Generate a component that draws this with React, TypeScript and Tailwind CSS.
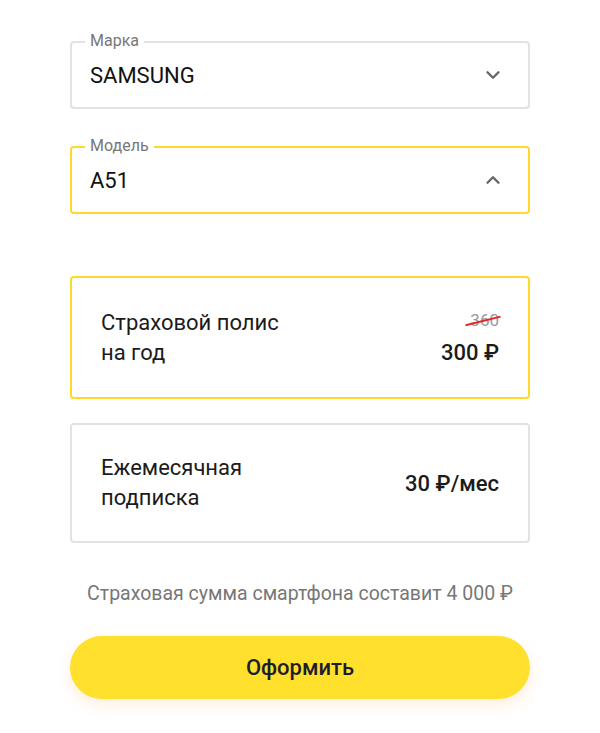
import { ChevronDown, ChevronUp } from "lucide-react";

function Select({
  label,
  value,
  open,
}: {
  label: string;
  value: string;
  open?: boolean;
}) {
  return (
    <div
      className={`relative h-[68px] rounded-[4px] border-2 flex items-center justify-between pl-[18px] pr-[24px] ${
        open ? "border-[#ffd92a]" : "border-[#e2e2e2]"
      }`}
    >
      <span className="absolute -top-[12px] left-[13px] bg-white px-[5px] text-[16px] leading-[20px] text-[#777]">
        {label}
      </span>
      <span className="text-[22px] text-[#111]">{value}</span>
      {open ? (
        <ChevronUp className="w-[22px] h-[22px] text-[#666]" strokeWidth={2.6} />
      ) : (
        <ChevronDown className="w-[22px] h-[22px] text-[#666]" strokeWidth={2.6} />
      )}
    </div>
  );
}

export default function App() {
  return (
    <div className="min-h-[733px] bg-white font-['Roboto',sans-serif]">
      <div className="w-[460px] mx-auto pt-[41px]">
        <Select label="Марка" value="SAMSUNG" />
        <div className="h-[37px]" />
        <Select label="Модель" value="A51" open />

        <div className="mt-[62px] h-[123px] rounded-[4px] border-2 border-[#ffd92a] flex items-center justify-between px-[29px]">
          <div className="text-[22px] leading-[30px] text-[#1b1b1b]">
            Страховой полис
            <br />
            на год
          </div>
          <div className="flex flex-col items-end">
            <span className="relative text-[17px] leading-[20px] text-[#999]">
              360
              <span className="absolute left-[-5px] right-[-2px] top-[10px] h-[1.5px] bg-[#e8242a] -rotate-[14deg]" />
            </span>
            <span className="mt-[10px] text-[22px] leading-[26px] font-medium text-[#1b1b1b]">
              300 ₽
            </span>
          </div>
        </div>

        <div className="mt-[24px] h-[120px] rounded-[4px] border-2 border-[#e2e2e2] flex items-center justify-between px-[29px]">
          <div className="text-[22px] leading-[30px] text-[#1b1b1b]">
            Ежемесячная
            <br />
            подписка
          </div>
          <span className="text-[22px] font-medium text-[#1b1b1b]">30 ₽/мес</span>
        </div>

        <p className="mt-[36px] text-center text-[19.5px] text-[#777]">
          Страховая сумма смартфона составит 4 000 ₽
        </p>

        <button className="mt-[28px] w-full h-[63px] rounded-full bg-[#ffe02c] text-[22px] font-medium text-[#1d1d2b] shadow-[0_6px_14px_rgba(255,190,120,0.25)]">
          Оформить
        </button>
      </div>
    </div>
  );
}
